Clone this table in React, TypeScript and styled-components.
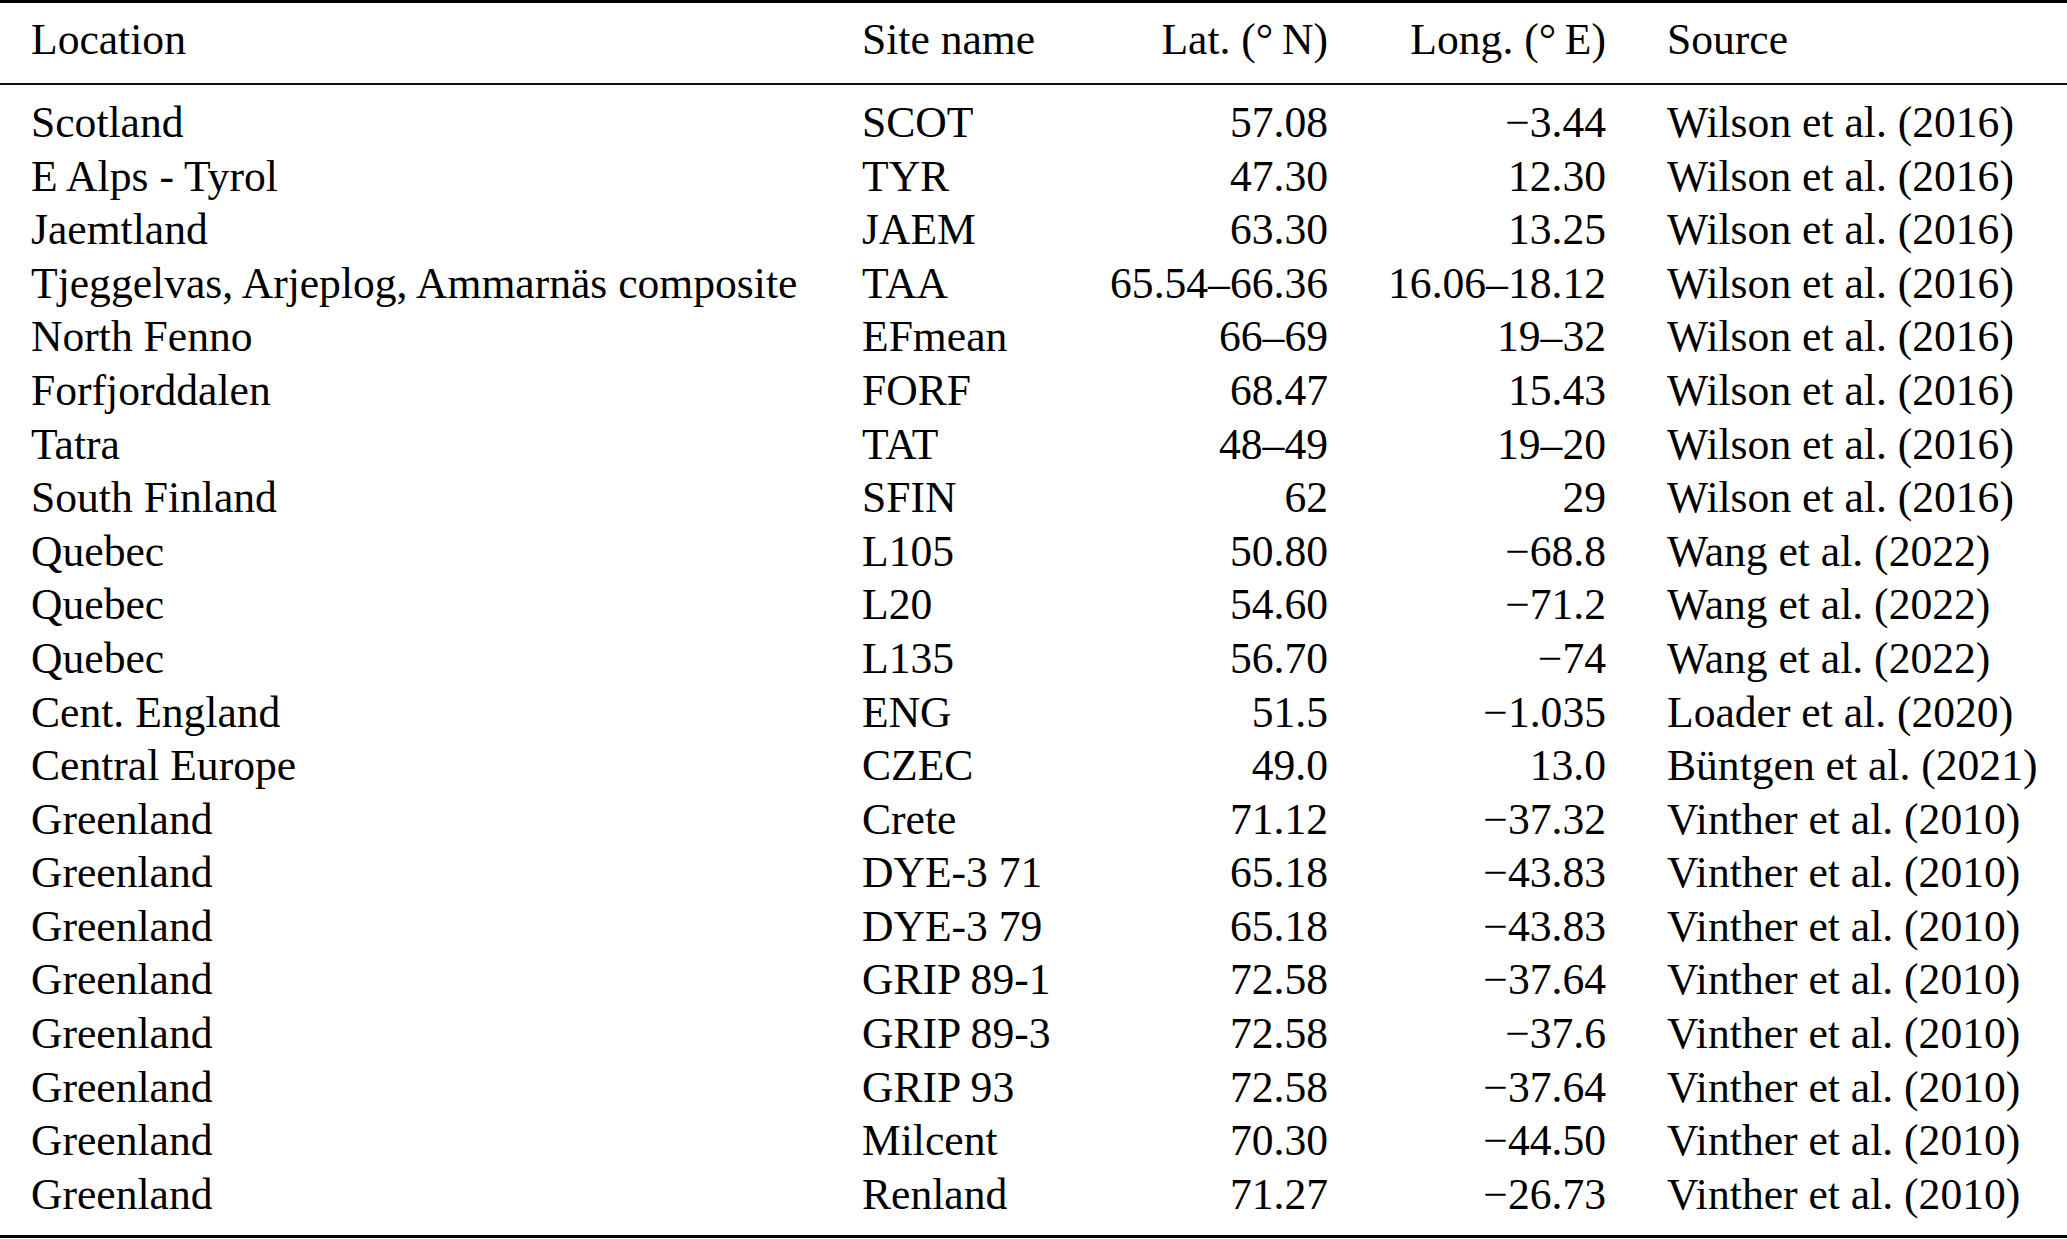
import styled, { createGlobalStyle } from "styled-components";

const GlobalStyle = createGlobalStyle`
  html, body {
    margin: 0;
    padding: 0;
    background: #ffffff;
  }
  body {
    font-family: "Liberation Serif", "Times New Roman", serif;
    color: #000000;
  }
`;

const Table = styled.div`
  width: 2067px;
  font-size: 43.6px;
  line-height: 53.6px;
`;

const Row = styled.div`
  display: grid;
  grid-template-columns: 862px 238px 228px 278px 1fr;
  white-space: nowrap;
`;

const Head = styled.div`
  border-top: 3px solid #000;
  border-bottom: 2px solid #111;
  padding: 9.8px 0 16.6px;
`;

const Body = styled.div`
  padding: 11px 0 13.7px;
  border-bottom: 3px solid #000;
`;

const Cell = styled.div<{ $align?: "left" | "right"; $pad?: number }>`
  text-align: ${(p) => p.$align || "left"};
  padding-left: ${(p) => p.$pad || 0}px;
`;

type Site = [string, string, string, string, string];

const rows: Site[] = [
  ["Scotland", "SCOT", "57.08", "\u22123.44", "Wilson et al. (2016)"],
  ["E Alps - Tyrol", "TYR", "47.30", "12.30", "Wilson et al. (2016)"],
  ["Jaemtland", "JAEM", "63.30", "13.25", "Wilson et al. (2016)"],
  ["Tjeggelvas, Arjeplog, Ammarnäs composite", "TAA", "65.54–66.36", "16.06–18.12", "Wilson et al. (2016)"],
  ["North Fenno", "EFmean", "66–69", "19–32", "Wilson et al. (2016)"],
  ["Forfjorddalen", "FORF", "68.47", "15.43", "Wilson et al. (2016)"],
  ["Tatra", "TAT", "48–49", "19–20", "Wilson et al. (2016)"],
  ["South Finland", "SFIN", "62", "29", "Wilson et al. (2016)"],
  ["Quebec", "L105", "50.80", "\u221268.8", "Wang et al. (2022)"],
  ["Quebec", "L20", "54.60", "\u221271.2", "Wang et al. (2022)"],
  ["Quebec", "L135", "56.70", "\u221274", "Wang et al. (2022)"],
  ["Cent. England", "ENG", "51.5", "\u22121.035", "Loader et al. (2020)"],
  ["Central Europe", "CZEC", "49.0", "13.0", "Büntgen et al. (2021)"],
  ["Greenland", "Crete", "71.12", "\u221237.32", "Vinther et al. (2010)"],
  ["Greenland", "DYE-3 71", "65.18", "\u221243.83", "Vinther et al. (2010)"],
  ["Greenland", "DYE-3 79", "65.18", "\u221243.83", "Vinther et al. (2010)"],
  ["Greenland", "GRIP 89-1", "72.58", "\u221237.64", "Vinther et al. (2010)"],
  ["Greenland", "GRIP 89-3", "72.58", "\u221237.6", "Vinther et al. (2010)"],
  ["Greenland", "GRIP 93", "72.58", "\u221237.64", "Vinther et al. (2010)"],
  ["Greenland", "Milcent", "70.30", "\u221244.50", "Vinther et al. (2010)"],
  ["Greenland", "Renland", "71.27", "\u221226.73", "Vinther et al. (2010)"],
];

const SiteRow = ({ site }: { site: Site }) => (
  <Row>
    <Cell $pad={31}>{site[0]}</Cell>
    <Cell>{site[1]}</Cell>
    <Cell $align="right">{site[2]}</Cell>
    <Cell $align="right">{site[3]}</Cell>
    <Cell $pad={61}>{site[4]}</Cell>
  </Row>
);

const App = () => {
  return (
    <>
      <GlobalStyle />
      <Table>
        <Head>
          <Row>
            <Cell $pad={31}>Location</Cell>
            <Cell>Site name</Cell>
            <Cell $align="right">Lat. (°&#8201;N)</Cell>
            <Cell $align="right">Long. (°&#8201;E)</Cell>
            <Cell $pad={61}>Source</Cell>
          </Row>
        </Head>
        <Body>
          {rows.map((site, i) => (
            <SiteRow key={i} site={site} />
          ))}
        </Body>
      </Table>
    </>
  );
};

export default App;
